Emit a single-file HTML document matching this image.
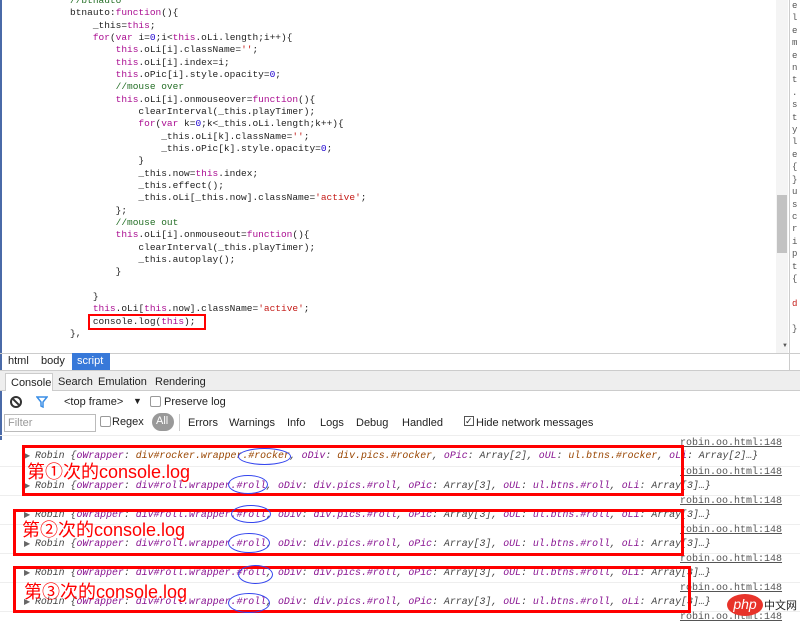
<!DOCTYPE html>
<html><head><meta charset="utf-8"><style>
*{margin:0;padding:0;box-sizing:border-box}
body{width:800px;height:619px;overflow:hidden;background:#fff;position:relative;font-family:"Liberation Sans",sans-serif;font-size:11px;color:#222}
pre{font-family:"Liberation Mono",monospace}
#code{position:absolute;left:13px;top:-5px;font-size:9.5px;line-height:12.33px;color:#222}
.k{color:#aa0d91}.c{color:#236e25}.s{color:#c41a16}.n{color:#1c00cf}
.abs{position:absolute;white-space:nowrap}
.msg{position:absolute;left:24px;font-family:"Liberation Mono",monospace;font-size:9.9px;font-style:italic;color:#444;white-space:pre}
.msg .p{color:#881391}.msg .b{color:#994500}
.msg:before{content:"▶ ";font-style:normal;font-size:8px;color:#666}
.link{position:absolute;left:680px;font-family:"Liberation Mono",monospace;font-size:10px;color:#555;text-decoration:underline}
.sep{position:absolute;left:0;width:800px;height:1px;background:#eee}
.red{position:absolute;border:3px solid #f00}
.zh{position:absolute;color:#f00;font-size:18px;font-family:"Liberation Sans","Noto Sans CJK SC",sans-serif;line-height:20px;white-space:nowrap}
.ov{position:absolute;border:1px solid #3344ee;border-radius:50%}
</style></head><body>
<div class="abs" style="left:0;top:0;width:2px;height:440px;background:#4a6aa8"></div>
<pre id="code">          <span class="c">//btnauto</span>
          btnauto:<span class="k">function</span>(){
              _this=<span class="k">this</span>;
              <span class="k">for</span>(<span class="k">var</span> i=<span class="n">0</span>;i&lt;<span class="k">this</span>.oLi.length;i++){
                  <span class="k">this</span>.oLi[i].className=<span class="s">''</span>;
                  <span class="k">this</span>.oLi[i].index=i;
                  <span class="k">this</span>.oPic[i].style.opacity=<span class="n">0</span>;
                  <span class="c">//mouse over</span>
                  <span class="k">this</span>.oLi[i].onmouseover=<span class="k">function</span>(){
                      clearInterval(_this.playTimer);
                      <span class="k">for</span>(<span class="k">var</span> k=<span class="n">0</span>;k&lt;_this.oLi.length;k++){
                          _this.oLi[k].className=<span class="s">''</span>;
                          _this.oPic[k].style.opacity=<span class="n">0</span>;
                      }
                      _this.now=<span class="k">this</span>.index;
                      _this.effect();
                      _this.oLi[_this.now].className=<span class="s">'active'</span>;
                  };
                  <span class="c">//mouse out</span>
                  <span class="k">this</span>.oLi[i].onmouseout=<span class="k">function</span>(){
                      clearInterval(_this.playTimer);
                      _this.autoplay();
                  }

              }
              <span class="k">this</span>.oLi[<span class="k">this</span>.now].className=<span class="s">'active'</span>;
              console.log(<span class="k">this</span>);
          },</pre>
<div class="red" style="left:88px;top:314px;width:118px;height:16px;border-width:2px"></div>
<!-- scrollbar & right panel -->
<div class="abs" style="left:776px;top:0;width:12px;height:354px;background:#f4f4f4"></div>
<div class="abs" style="left:777px;top:195px;width:10px;height:58px;background:#c2c2c2"></div>
<div class="abs" style="left:782px;top:343px;font-size:6px;color:#555">▼</div>
<div class="abs" style="left:789px;top:0;width:1px;height:371px;background:#ccc"></div>
<pre style="position:absolute;white-space:pre;left:792px;top:0;font-size:9px;line-height:12.4px;color:#555">e
l
e
m
e
n
t
.
s
t
y
l
e
{
}
u
s
c
r
i
p
t
{

<span style="color:#c41a16">d</span>

}</pre>
<!-- breadcrumb -->
<div class="abs" style="left:0;top:353px;width:800px;height:1px;background:#ccc"></div>
<div class="abs" style="left:8px;top:355px;font-size:11px">html</div>
<div class="abs" style="left:41px;top:355px;font-size:11px">body</div>
<div class="abs" style="left:72px;top:353px;width:38px;height:17px;background:#3879d9;color:#fff;padding:2px 5px">script</div>
<!-- tabs -->
<div class="abs" style="left:0;top:370px;width:800px;height:21px;background:#eee;border-top:1px solid #ccc;border-bottom:1px solid #ccc"></div>
<div class="abs" style="left:5px;top:373px;width:48px;height:18px;background:#fff;border:1px solid #ccc;border-bottom:none;padding:3px 5px">Console</div>
<div class="abs" style="left:58px;top:376px">Search</div>
<div class="abs" style="left:98px;top:376px">Emulation</div>
<div class="abs" style="left:155px;top:376px">Rendering</div>
<!-- toolbar -->
<div class="abs" style="left:10px;top:396px;width:12px;height:12px;border:2px solid #333;border-radius:50%"></div>
<div class="abs" style="left:12px;top:401px;width:8px;height:2px;background:#333;transform:rotate(45deg)"></div>
<svg class="abs" style="left:36px;top:396px" width="12" height="12"><path d="M1 1h10L7 6v5L5 10V6z" fill="none" stroke="#3a8ee6" stroke-width="1.5"/></svg>
<div class="abs" style="left:64px;top:396px">&lt;top frame&gt;</div>
<div class="abs" style="left:133px;top:396px;font-size:9px">▼</div>
<div class="abs" style="left:150px;top:396px;width:11px;height:11px;border:1px solid #999;border-radius:2px"></div>
<div class="abs" style="left:164px;top:396px">Preserve log</div>
<div class="abs" style="left:4px;top:414px;width:92px;height:18px;border:1px solid #bbb;color:#999;padding:2px 3px">Filter</div>
<div class="abs" style="left:100px;top:416px;width:11px;height:11px;border:1px solid #999;border-radius:2px"></div>
<div class="abs" style="left:112px;top:416px">Regex</div>
<div class="abs" style="left:152px;top:413px;width:22px;height:18px;background:#999;color:#fff;border-radius:9px;padding:2px 4px">All</div>
<div class="abs" style="left:179px;top:414px;width:1px;height:17px;background:#ccc"></div>
<div class="abs" style="left:188px;top:417px">Errors</div>
<div class="abs" style="left:229px;top:417px">Warnings</div>
<div class="abs" style="left:287px;top:417px">Info</div>
<div class="abs" style="left:320px;top:417px">Logs</div>
<div class="abs" style="left:356px;top:417px">Debug</div>
<div class="abs" style="left:402px;top:417px">Handled</div>
<div class="abs" style="left:464px;top:416px;width:10px;height:10px;border:1px solid #555;font-size:9px;line-height:8px">✓</div>
<div class="abs" style="left:476px;top:417px">Hide network messages</div>
<div class="sep" style="top:435px"></div>
<!-- messages -->
<div class="sep" style="top:466px"></div><div class="sep" style="top:495px"></div><div class="sep" style="top:524px"></div><div class="sep" style="top:553px"></div><div class="sep" style="top:582px"></div><div class="sep" style="top:611px"></div>
<div class="link" style="top:438px">robin.oo.html:148</div>
<div class="link" style="top:467px">robin.oo.html:148</div>
<div class="link" style="top:496px">robin.oo.html:148</div>
<div class="link" style="top:525px">robin.oo.html:148</div>
<div class="link" style="top:554px">robin.oo.html:148</div>
<div class="link" style="top:583px">robin.oo.html:148</div>
<div class="link" style="top:612px">robin.oo.html:148</div>
<div class="msg" style="top:450px">Robin {<span class="p">oWrapper</span>: <span class="b">div#rocker.wrapper.#rocker</span>, <span class="p">oDiv</span>: <span class="b">div.pics.#rocker</span>, <span class="p">oPic</span>: Array[2], <span class="p">oUL</span>: <span class="b">ul.btns.#rocker</span>, <span class="p">oLi</span>: Array[2]…}</div>
<div class="msg" style="top:480px">Robin {<span class="p">oWrapper</span>: <span class="p">div#roll.wrapper.#roll</span>, <span class="p">oDiv</span>: <span class="p">div.pics.#roll</span>, <span class="p">oPic</span>: Array[3], <span class="p">oUL</span>: <span class="p">ul.btns.#roll</span>, <span class="p">oLi</span>: Array[3]…}</div>
<div class="msg" style="top:509px">Robin {<span class="p">oWrapper</span>: <span class="p">div#roll.wrapper.#roll</span>, <span class="p">oDiv</span>: <span class="p">div.pics.#roll</span>, <span class="p">oPic</span>: Array[3], <span class="p">oUL</span>: <span class="p">ul.btns.#roll</span>, <span class="p">oLi</span>: Array[3]…}</div>
<div class="msg" style="top:538px">Robin {<span class="p">oWrapper</span>: <span class="p">div#roll.wrapper.#roll</span>, <span class="p">oDiv</span>: <span class="p">div.pics.#roll</span>, <span class="p">oPic</span>: Array[3], <span class="p">oUL</span>: <span class="p">ul.btns.#roll</span>, <span class="p">oLi</span>: Array[3]…}</div>
<div class="msg" style="top:567px">Robin {<span class="p">oWrapper</span>: <span class="p">div#roll.wrapper.#roll</span>, <span class="p">oDiv</span>: <span class="p">div.pics.#roll</span>, <span class="p">oPic</span>: Array[3], <span class="p">oUL</span>: <span class="p">ul.btns.#roll</span>, <span class="p">oLi</span>: Array[3]…}</div>
<div class="msg" style="top:596px">Robin {<span class="p">oWrapper</span>: <span class="p">div#roll.wrapper.#roll</span>, <span class="p">oDiv</span>: <span class="p">div.pics.#roll</span>, <span class="p">oPic</span>: Array[3], <span class="p">oUL</span>: <span class="p">ul.btns.#roll</span>, <span class="p">oLi</span>: Array[3]…}</div>
<!-- red boxes -->
<div class="red" style="left:22px;top:445px;width:662px;height:51px"></div>
<div class="red" style="left:13px;top:509px;width:671px;height:47px"></div>
<div class="red" style="left:13px;top:566px;width:678px;height:47px"></div>
<div class="zh" style="left:27px;top:462px">第①次的console.log</div>
<div class="zh" style="left:22px;top:520px">第②次的console.log</div>
<div class="zh" style="left:24px;top:582px">第③次的console.log</div>
<div class="ov" style="left:238px;top:448px;width:53px;height:17px"></div>
<div class="ov" style="left:228px;top:475px;width:40px;height:19px"></div>
<div class="ov" style="left:231px;top:505px;width:40px;height:18px"></div>
<div class="ov" style="left:228px;top:533px;width:42px;height:20px"></div>
<div class="ov" style="left:238px;top:565px;width:35px;height:19px"></div>
<div class="ov" style="left:228px;top:593px;width:42px;height:20px"></div>
<!-- watermark -->
<div class="abs" style="left:727px;top:594px;width:36px;height:22px;background:#e8332a;border-radius:50%;color:#fff;font-size:14px;text-align:center;line-height:20px;font-style:italic">php</div>
<div class="abs" style="left:764px;top:597px;font-size:11px;color:#222;font-family:'Liberation Sans','Noto Sans CJK SC',sans-serif">中文网</div>
</body></html>
